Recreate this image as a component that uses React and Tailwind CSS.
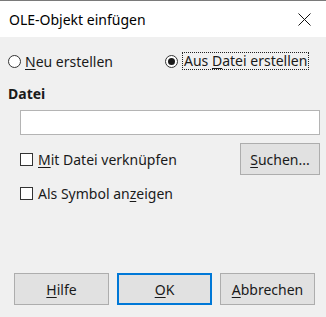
import React from "react";

const font = { fontFamily: '"Noto Sans", "Open Sans", sans-serif' };

function Radio({ checked }) {
  return (
    <span className="flex h-[13px] w-[13px] shrink-0 items-center justify-center rounded-full border border-[#333333] bg-white">
      {checked && <span className="h-[7px] w-[7px] rounded-full bg-[#1a1a1a]" />}
    </span>
  );
}

function Check() {
  return <span className="h-[13px] w-[13px] shrink-0 border border-[#333333] bg-white" />;
}

function Btn({ children, primary, width = "w-[95px]", className = "" }) {
  return (
    <div
      className={
        "flex h-[32px] items-center justify-center bg-[#e1e1e1] text-[14px] text-[#1a1a1a] " +
        width +
        " " +
        (primary ? "border-2 border-[#0078d7] " : "border border-[#adadad] ") +
        className
      }
    >
      {children}
    </div>
  );
}

export default function App() {
  return (
    <div
      className="flex h-[317px] w-[326px] flex-col overflow-hidden border-t border-[#7a7a7a] bg-[#f0f0f0] text-[14px] text-[#1a1a1a]"
      style={font}
    >
      <div className="flex h-[36px] shrink-0 items-center justify-between bg-white pl-[9px] pr-[15px]">
        <span className="text-[14px] text-black">OLE-Objekt einfügen</span>
        <svg width="13" height="13" viewBox="0 0 13 13" className="mt-[1px]">
          <path d="M0.5 0.5 L12.5 12.5 M12.5 0.5 L0.5 12.5" stroke="#111" strokeWidth="1" />
        </svg>
      </div>

      <div className="flex flex-1 flex-col px-[8px]">
        <div className="mt-[15px] flex h-[18px] items-center">
          <div className="flex w-[157px] items-center gap-[4px]">
            <Radio />
            <span>
              <span className="underline underline-offset-2">N</span>eu erstellen
            </span>
          </div>
          <div className="flex items-center gap-[4px]">
            <Radio checked />
            <span className="border border-dotted border-[#222] px-[1px] leading-[16px]">
              Aus <span className="underline underline-offset-2">D</span>atei erstellen
            </span>
          </div>
        </div>

        <div className="mt-[15px] font-bold leading-[18px]">Datei</div>

        <div className="ml-[12px] mt-[7px] h-[25px] w-[300px] border border-[#b4b4b4] bg-white" />

        <div className="ml-[12px] mt-[8px] flex items-center justify-between">
          <div className="flex items-center gap-[5px]">
            <Check />
            <span>
              <span className="underline underline-offset-2">M</span>it Datei verknüpfen
            </span>
          </div>
          <Btn width="w-[80px]" className="mr-[-2px] h-[31px]">
            <span>
              <span className="underline underline-offset-2">S</span>uchen...
            </span>
          </Btn>
        </div>

        <div className="ml-[12px] mt-[8px] flex items-center gap-[5px]">
          <Check />
          <span>
            Als Symbol an<span className="underline underline-offset-2">z</span>eigen
          </span>
        </div>

        <div className="mb-[12px] mt-auto flex gap-[8px] pl-[6px]">
          <Btn>
            <span>
              <span className="underline underline-offset-2">H</span>ilfe
            </span>
          </Btn>
          <Btn primary>
            <span>
              <span className="underline underline-offset-2">O</span>K
            </span>
          </Btn>
          <Btn>
            <span>
              <span className="underline underline-offset-2">A</span>bbrechen
            </span>
          </Btn>
        </div>
      </div>
    </div>
  );
}
